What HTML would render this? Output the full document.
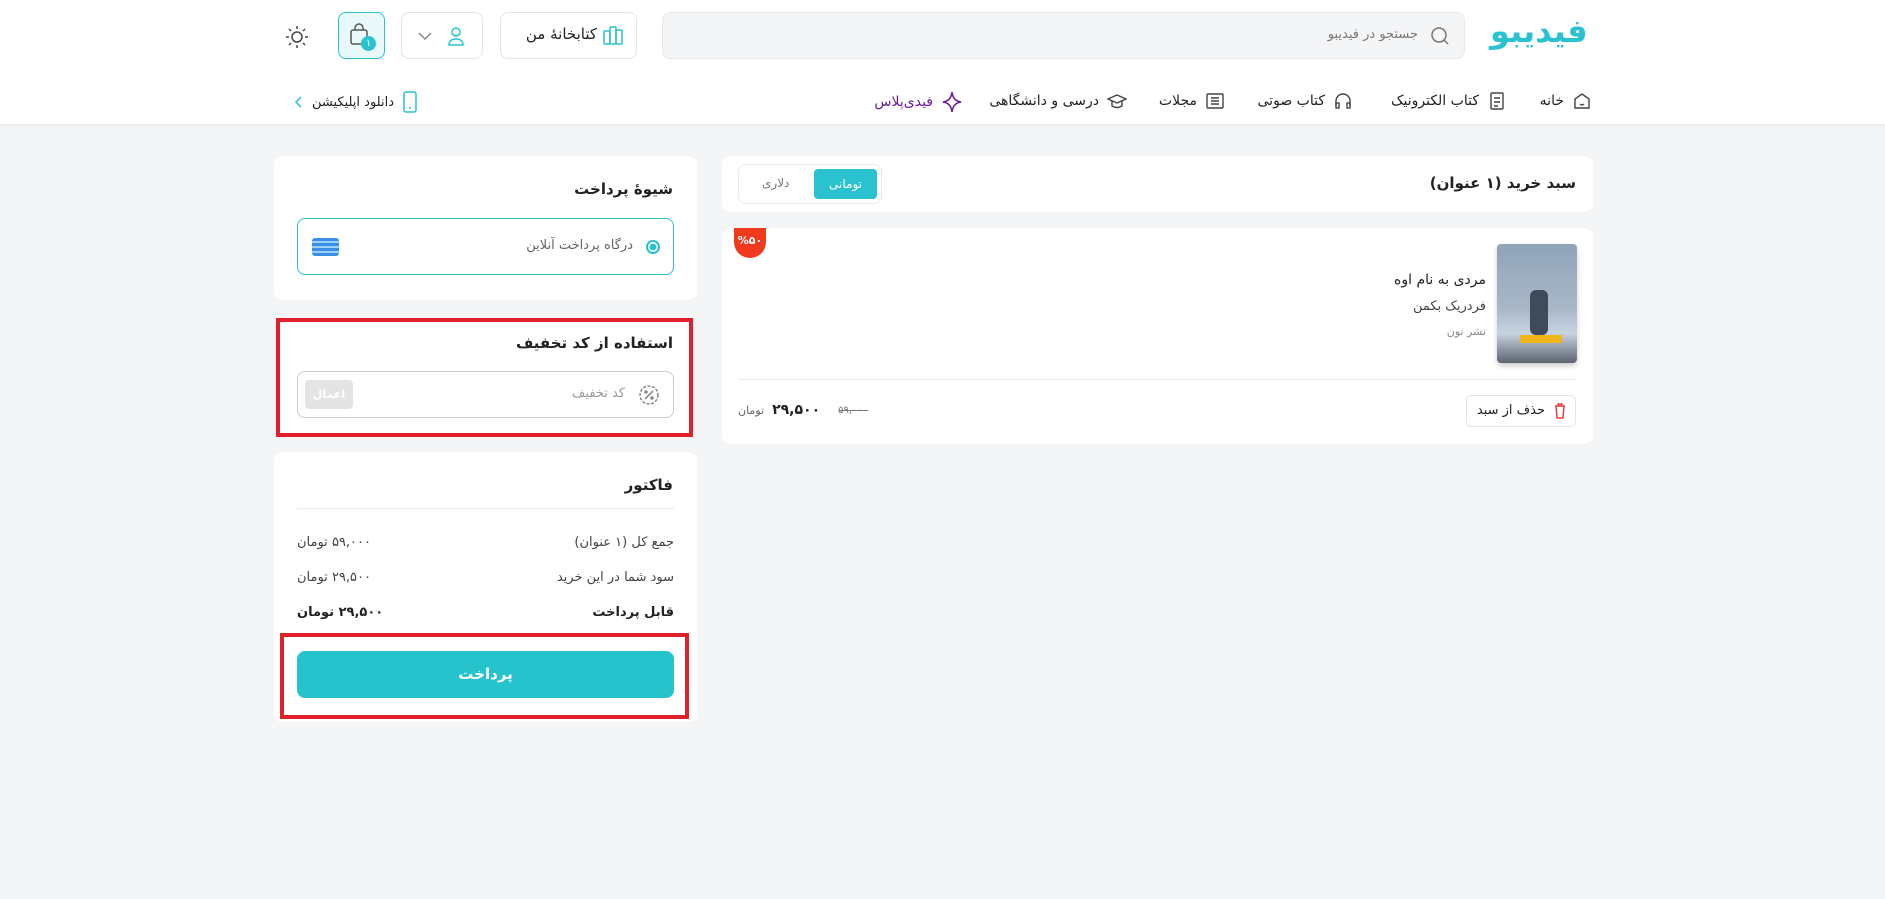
<!DOCTYPE html>
<html><head><meta charset="utf-8"><style>
*{box-sizing:border-box;margin:0;padding:0}
body{width:1885px;height:899px;background:#f4f5f7;font-family:"DejaVu Sans","Liberation Sans",sans-serif;color:#222;position:relative;overflow:hidden;direction:rtl}
.a{position:absolute}
.hdr{left:0;top:0;width:1885px;height:124px;background:#fff;box-shadow:0 1px 3px rgba(0,0,0,.06)}
.btn{border:1px solid #e2e4e8;border-radius:8px;background:#fff}
.card{background:#fff;border-radius:8px}
.t{white-space:nowrap;font-size:14px}
.nav{font-size:14px;white-space:nowrap;top:91px;display:flex;align-items:center;gap:8px}
.red{border:4px solid #e0212b}
svg{display:block}
</style></head><body>
<div class="a hdr"></div>
<div class="a t" style="left:1490px;top:12px;font-size:32px;font-weight:bold;color:#2ac2ce;letter-spacing:1px">فیدیبو</div>
<div class="a" style="left:662px;top:12px;width:803px;height:47px;background:#f4f5f7;border:1px solid #e6e8eb;border-radius:8px"></div>
<svg class="a" style="left:1430px;top:26px" width="20" height="20" viewBox="0 0 20 20"><circle cx="9" cy="9" r="7" fill="none" stroke="#777" stroke-width="1.5"/><path d="M14 14l4 4" stroke="#777" stroke-width="1.5"/></svg>
<div class="a t" style="right:467px;top:27px;color:#777;font-size:13px">جستجو در فیدیبو</div>
<div class="a btn" style="left:500px;top:12px;width:137px;height:47px"></div>
<div class="a t" style="right:1288px;top:25px;font-size:15px">کتابخانهٔ من</div>
<svg class="a" style="left:602px;top:24px" width="22" height="22" viewBox="0 0 22 22" fill="none" stroke="#2ac2ce" stroke-width="1.5"><rect x="2" y="7" width="6" height="13" rx="1"/><rect x="8" y="3" width="6" height="17" rx="1"/><rect x="14" y="6" width="6" height="14" rx="1"/></svg>
<div class="a btn" style="left:401px;top:12px;width:82px;height:47px"></div>
<svg class="a" style="left:444px;top:24px" width="24" height="24" viewBox="0 0 24 24" fill="none" stroke="#2ac2ce" stroke-width="1.5"><circle cx="12" cy="8" r="4"/><path d="M5 21c0-4 3-6 7-6s7 2 7 6z"/></svg>
<svg class="a" style="left:417px;top:30px" width="16" height="12" viewBox="0 0 16 12"><path d="M2 3l6 6 6-6" fill="none" stroke="#888" stroke-width="1.5"/></svg>
<div class="a" style="left:338px;top:12px;width:47px;height:47px;border:1px solid #2ac2ce;background:#e9f8fa;border-radius:8px"></div>
<svg class="a" style="left:348px;top:22px" width="26" height="28" viewBox="0 0 26 28" fill="none" stroke="#555" stroke-width="1.5"><rect x="3" y="8" width="16" height="14" rx="2"/><path d="M7 8V6a4 4 0 018 0v2"/></svg>
<div class="a" style="left:361px;top:36px;width:15px;height:15px;border-radius:50%;background:#2ac2ce;color:#fff;font-size:10px;text-align:center;line-height:15px">۱</div>
<svg class="a" style="left:285px;top:25px" width="24" height="24" viewBox="0 0 24 24" fill="none" stroke="#444" stroke-width="1.5"><circle cx="12" cy="12" r="5"/><path d="M12 1v3M12 20v3M1 12h3M20 12h3M4 4l2 2M18 18l2 2M4 20l2-2M18 6l2-2"/></svg>

<div class="a nav" style="right:293px"><svg width="20" height="20" viewBox="0 0 20 20" fill="none" stroke="#444" stroke-width="1.4"><path d="M3 8l7-5 7 5v9H3z"/><path d="M8 13q2 2 4 0"/></svg><span>خانه</span></div>
<div class="a nav" style="right:378px"><svg width="20" height="20" viewBox="0 0 20 20" fill="none" stroke="#444" stroke-width="1.4"><rect x="4" y="2" width="12" height="16" rx="1"/><path d="M7 7h6M7 11h6M7 15h4"/></svg><span>کتاب الکترونیک</span></div>
<div class="a nav" style="right:532px"><svg width="20" height="20" viewBox="0 0 20 20" fill="none" stroke="#444" stroke-width="1.4"><path d="M3 15v-5a7 7 0 0114 0v5"/><rect x="3" y="12" width="3" height="5"/><rect x="14" y="12" width="3" height="5"/></svg><span>کتاب صوتی</span></div>
<div class="a nav" style="right:660px"><svg width="20" height="20" viewBox="0 0 20 20" fill="none" stroke="#444" stroke-width="1.4"><rect x="2" y="3" width="16" height="14" rx="1"/><path d="M6 7h8M6 10h8M6 13h8"/></svg><span>مجلات</span></div>
<div class="a nav" style="right:758px"><svg width="20" height="20" viewBox="0 0 20 20" fill="none" stroke="#444" stroke-width="1.4"><path d="M1 8l9-4 9 4-9 4z"/><path d="M5 10v5q5 3 10 0v-5"/></svg><span>درسی و دانشگاهی</span></div>
<div class="a nav" style="right:922px;color:#6a1b9a"><svg width="22" height="22" viewBox="0 0 22 22" fill="none" stroke="#6a1b9a" stroke-width="1.5"><path d="M11 1q1 9 9 10q-8 1-9 10q-1-9-9-10q8-1 9-10z"/></svg><span>فیدی‌پلاس</span></div>
<div class="a nav" style="right:1467px;font-size:13px"><svg width="16" height="22" viewBox="0 0 16 22" fill="none" stroke="#2ac2ce" stroke-width="1.5"><rect x="2" y="1" width="12" height="20" rx="2"/><path d="M7 17h2"/></svg><span>دانلود اپلیکیشن</span><svg width="10" height="14" viewBox="0 0 10 14"><path d="M7 2L2 7l5 5" fill="none" stroke="#2ac2ce" stroke-width="1.5"/></svg></div>

<!-- right column -->
<div class="a card" style="left:722px;top:156px;width:871px;height:56px"></div>
<div class="a t" style="right:309px;top:174px;font-size:15px;font-weight:bold">سبد خرید (۱ عنوان)</div>
<div class="a" style="left:738px;top:164px;width:144px;height:40px;border:1px solid #e6e8eb;border-radius:8px;background:#fff"></div>
<div class="a" style="left:814px;top:169px;width:63px;height:30px;background:#2ac2ce;border-radius:4px;color:#fff;font-size:12px;text-align:center;line-height:30px">تومانی</div>
<div class="a t" style="left:762px;top:176px;font-size:12px;color:#777">دلاری</div>

<div class="a card" style="left:722px;top:228px;width:871px;height:216px"></div>
<div class="a" style="left:734px;top:228px;width:32px;height:30px;background:#f03a1e;border-radius:0 0 16px 16px;color:#fff;font-size:11px;font-weight:bold;text-align:center;line-height:26px">%۵۰</div>
<div class="a" style="left:1497px;top:244px;width:80px;height:119px;border-radius:4px;background:linear-gradient(180deg,#8fa3b8 0%,#a9b8c8 55%,#c7d3df 75%,#5c6470 100%);box-shadow:0 3px 6px rgba(0,0,0,.2)"></div>
<div class="a" style="left:1530px;top:290px;width:18px;height:45px;background:#3f4a5a;border-radius:6px"></div>
<div class="a" style="left:1520px;top:335px;width:42px;height:8px;background:#f0b61a"></div>
<div class="a t" style="right:399px;top:272px;font-size:14px">مردی به نام اوه</div>
<div class="a t" style="right:399px;top:299px;font-size:13px;color:#444">فردریک بکمن</div>
<div class="a t" style="right:399px;top:325px;font-size:11px;color:#888">نشر نون</div>
<div class="a" style="left:738px;top:379px;width:839px;height:1px;background:#e6e8eb"></div>
<div class="a btn" style="left:1466px;top:395px;width:110px;height:32px;border-radius:5px"></div>
<div class="a t" style="right:340px;top:403px;font-size:13px">حذف از سبد</div>
<svg class="a" style="left:1554px;top:403px" width="12" height="16" viewBox="0 0 12 16" fill="none" stroke="#e53935" stroke-width="1.4"><path d="M1 3h10M4 3V1h4v2M2 3l1 12h6l1-12"/></svg>
<div class="a" style="left:738px;top:402px;display:flex;direction:ltr;align-items:center;gap:8px;white-space:nowrap">
<span style="font-size:11px;color:#666">تومان</span><b style="font-size:14px">۲۹,۵۰۰</b><s style="font-size:10px;color:#777;margin-left:10px">۵۹,۰۰۰</s></div>

<!-- left column -->
<div class="a card" style="left:274px;top:156px;width:423px;height:144px"></div>
<div class="a t" style="right:1212px;top:180px;font-size:15px;font-weight:bold">شیوهٔ پرداخت</div>
<div class="a" style="left:297px;top:218px;width:377px;height:57px;border:1px solid #2ac2ce;border-radius:8px"></div>
<div class="a" style="left:646px;top:240px;width:14px;height:14px;border-radius:50%;border:2px solid #2ac2ce;background:radial-gradient(#2ac2ce 45%,#fff 50%)"></div>
<div class="a t" style="right:1252px;top:238px;font-size:13px;color:#666">درگاه پرداخت آنلاین</div>
<div class="a" style="left:312px;top:238px;width:27px;height:18px;border-radius:3px;background:repeating-linear-gradient(180deg,#3a8ee6 0 3px,#9cd0f7 3px 5px)"></div>

<div class="a red" style="left:276px;top:318px;width:417px;height:119px"></div>
<div class="a card" style="left:280px;top:322px;width:409px;height:111px;border-radius:0"></div>
<div class="a t" style="right:1212px;top:334px;font-size:15px;font-weight:bold">استفاده از کد تخفیف</div>
<div class="a" style="left:297px;top:371px;width:377px;height:47px;border:1px solid #ccc;border-radius:8px"></div>
<svg class="a" style="left:638px;top:384px" width="22" height="22" viewBox="0 0 22 22" fill="none" stroke="#777" stroke-width="1.3"><circle cx="11" cy="11" r="9" stroke-dasharray="3 1.5"/><path d="M7 15l8-8"/><circle cx="8" cy="8" r="1"/><circle cx="14" cy="14" r="1"/></svg>
<div class="a t" style="right:1260px;top:386px;font-size:13px;color:#999">کد تخفیف</div>
<div class="a" style="left:305px;top:380px;width:48px;height:29px;background:#e4e4e4;border-radius:4px;color:#fff;font-size:11px;font-weight:bold;text-align:center;line-height:29px">اعمال</div>

<div class="a card" style="left:274px;top:452px;width:423px;height:270px"></div>
<div class="a t" style="right:1212px;top:476px;font-size:15px;font-weight:bold">فاکتور</div>
<div class="a" style="left:297px;top:508px;width:377px;height:1px;background:#e6e8eb"></div>
<div class="a t" style="right:1211px;top:535px;font-size:13px;color:#444">جمع کل (۱ عنوان)</div>
<div class="a t" style="left:297px;top:535px;font-size:13px;color:#444">۵۹,۰۰۰ تومان</div>
<div class="a t" style="right:1211px;top:570px;font-size:13px;color:#444">سود شما در این خرید</div>
<div class="a t" style="left:297px;top:570px;font-size:13px;color:#444">۲۹,۵۰۰ تومان</div>
<div class="a t" style="right:1211px;top:605px;font-size:13px;font-weight:bold">قابل پرداخت</div>
<div class="a t" style="left:297px;top:605px;font-size:13px;font-weight:bold">۲۹,۵۰۰ تومان</div>
<div class="a red" style="left:280px;top:633px;width:409px;height:86px"></div>
<div class="a" style="left:297px;top:651px;width:377px;height:47px;background:#26c3cd;border-radius:8px;color:#fff;font-size:15px;font-weight:bold;text-align:center;line-height:47px">پرداخت</div>
</body></html>
